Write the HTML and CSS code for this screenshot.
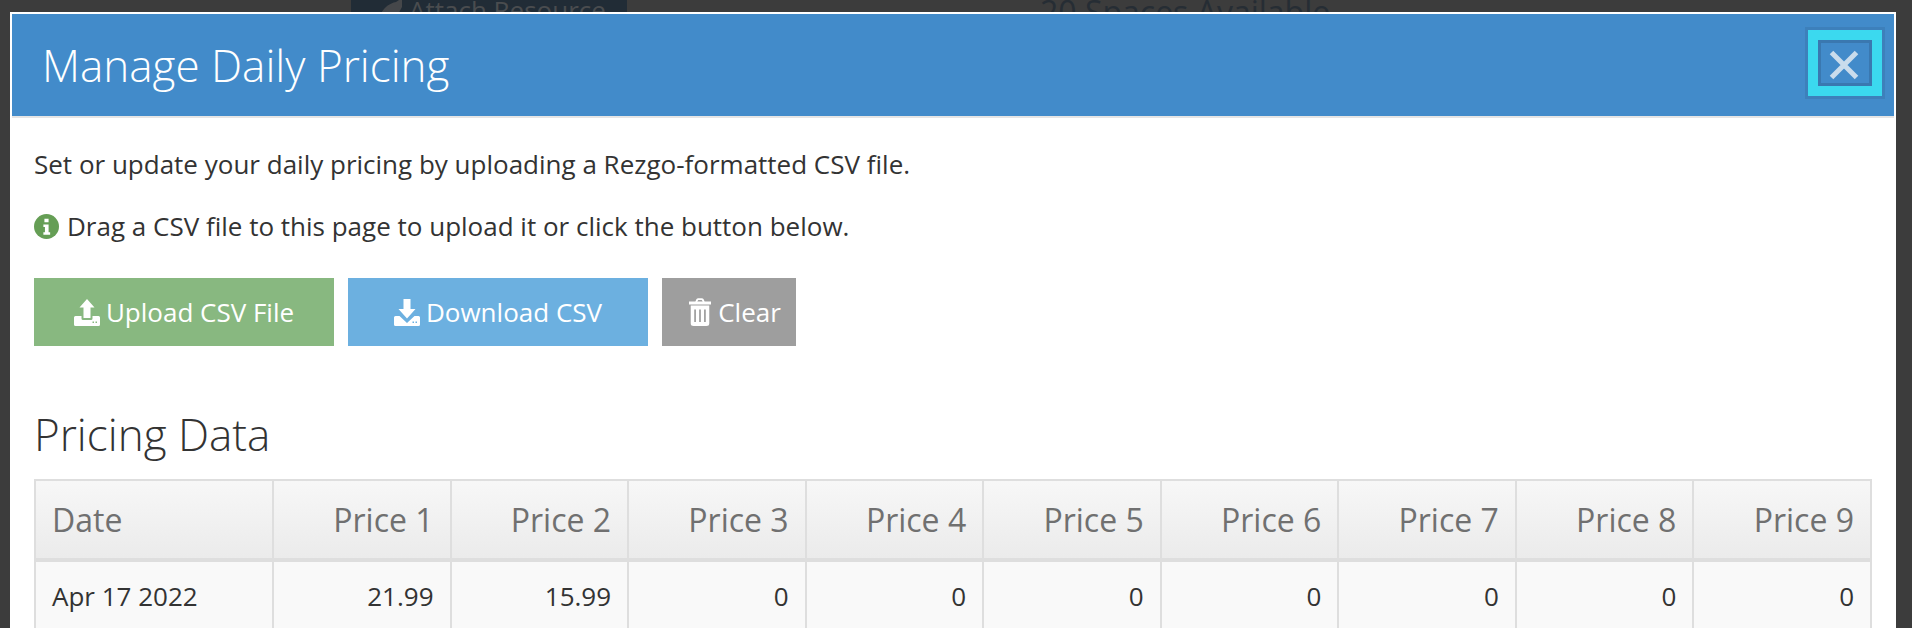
FILE: index.html
```html
<!DOCTYPE html>
<html lang="en">
<head>
<meta charset="utf-8">
<title>Manage Daily Pricing</title>
<link rel="stylesheet" href="styles.css">
</head>
<body>
<div class="backdrop-bar">
  <div class="attach">
    <svg viewBox="0 0 24 24" width="24" height="24"><path d="M24 0v9L16 24H0C2 14 8 6 18 4z"/></svg>
    Attach Resource
  </div>
  <div class="spaces">20 Spaces Available</div>
</div>
<div class="modal">
  <header class="modal-head">
    <h1>Manage Daily Pricing</h1>
    <button class="close" aria-label="Close">
      <svg viewBox="0 0 30 30" width="30" height="30"><path d="M2.500 2.500L27.500 27.500M27.500 2.500L2.500 27.500"/></svg>
    </button>
  </header>
  <div class="modal-body">
    <p class="lead">Set or update your daily pricing by uploading a Rezgo-formatted CSV file.</p>
    <p class="hint">
      <svg class="info" viewBox="0 0 24 24" width="25" height="25"><circle cx="12" cy="12" r="12"/><path class="glyph" d="M10 4.500h4v3.500h-4zM9 10h5v7.500h1.500V20h-6.500v-2.500H10.500v-5H9z"/></svg>
      Drag a CSV file to this page to upload it or click the button below.
    </p>
    <div class="actions">
      <button class="btn green">
        <svg viewBox="0 0 26 27" width="26" height="27" fill-rule="evenodd"><path d="M13 0L20.500 8.500H16.500V19H9.500V8.500H5.500ZM1.500 17H7.500V19.500Q7.500 21 9 21H17Q18.500 21 18.500 19.500V17H24.500Q26 17 26 18.500V25.500Q26 27 24.500 27H1.500Q0 27 0 25.500V18.500Q0 17 1.500 17ZM18.500 22.500V24H20V22.500ZM21.500 22.500V24H23V22.500Z"/></svg>
        Upload CSV File
      </button>
      <button class="btn blue">
        <svg viewBox="0 0 26 27" width="26" height="27" fill-rule="evenodd"><path d="M9.500 0H16.500V10H21.500L13 19.500L4.500 10H9.500ZM1.500 17H5.500L13 24L20.500 17H24.500Q26 17 26 18.500V25.500Q26 27 24.500 27H1.500Q0 27 0 25.500V18.500Q0 17 1.500 17ZM18.500 22.500V24H20V22.500ZM21.500 22.500V24H23V22.500Z"/></svg>
        Download CSV
      </button>
      <button class="btn grey">
        <svg viewBox="0 0 19 28" width="22" height="28" preserveAspectRatio="none" fill-rule="evenodd"><path d="M5.500 3.500L6.500 1Q7 .3 8 .3H11Q12 .3 12.500 1L13.500 3.500H19V6.500H0V3.500ZM7.200 3.500H11.800L11 2H8ZM1.500 7.500H17.500V25.500A2.500 2.500 0 0 1 15 28H4A2.500 2.500 0 0 1 1.500 25.500ZM4.500 11.500V24H6V11.500ZM8.750 11.500V24H10.250V11.500ZM13 11.500V24H14.500V11.500Z"/></svg>
        Clear
      </button>
    </div>
    <h2>Pricing Data</h2>
    <table>
      <thead>
        <tr><th class="date">Date</th><th>Price 1</th><th>Price 2</th><th>Price 3</th><th>Price 4</th><th>Price 5</th><th>Price 6</th><th>Price 7</th><th>Price 8</th><th>Price 9</th></tr>
      </thead>
      <tbody>
        <tr><td class="date">Apr 17 2022</td><td>21.99</td><td>15.99</td><td>0</td><td>0</td><td>0</td><td>0</td><td>0</td><td>0</td><td>0</td></tr>
      </tbody>
    </table>
  </div>
</div>
</body>
</html>
```

FILE: styles.css
```css
* { box-sizing: border-box; }
html, body { margin: 0; height: 628px; overflow: hidden; }
body { background: #3c3c3c; font-family: "Open Sans", sans-serif; color: #333; }
.backdrop-bar { height: 12px; overflow: hidden; display: flex; }
.attach { margin-left: 351px; width: 276px; height: 50px; background: #212c36; color: #4a4c4f; font-size: 26px; line-height: 20px; padding: 0 0 0 27px; display: flex; gap: 7px; white-space: nowrap; }
.attach svg { fill: #45474a; flex: none; margin-top: -2px; }
.spaces { margin-left: 413px; color: #262d34; font-size: 32px; line-height: 23px; white-space: nowrap; }
.modal { margin: 0 16px 0 10px; background: #fff; border: 2px solid #fff; height: 640px; }
.modal-head { height: 104px; background: #428bca; border-bottom: 2px solid #e5e5e5; display: flex; align-items: center; justify-content: space-between; padding: 0 12px 0 30px; }
h1 { margin: 0; font-size: 44px; font-weight: 300; color: #fff; line-height: 1; }
.close { width: 74px; height: 66px; margin-bottom: 4px; background: #428bca; border: 0; outline: 10px solid #3bd9ef; outline-offset: -10px; box-shadow: inset 0 0 0 13px #3a78b0, 0 0 0 3px #3d80bb; padding: 4px 2px 0 0; display: flex; align-items: center; justify-content: center; }
.close svg { stroke: #c9dcec; stroke-width: 5; fill: none; }
.modal-body { padding: 0 22px; }
p { margin: 0; font-size: 26px; line-height: 34px; }
.lead { margin-top: 29px; }
.hint { margin-top: 28px; display: flex; align-items: center; gap: 8px; }
.info { flex: none; }
.info circle { fill: #659e55; }
.info .glyph { fill: #fff; }
.actions { display: flex; gap: 14px; margin-top: 35px; }
.btn { height: 68px; border: 0; color: #fff; font: 26px "Open Sans", sans-serif; display: flex; align-items: center; justify-content: center; gap: 6px; padding: 0; }
.btn svg { fill: #fff; }
.green { width: 300px; background: #88b880; }
.blue { width: 300px; background: #6cb0e0; }
.grey { width: 134px; background: #9e9e9e; padding-left: 12px; gap: 7px; }
h2 { margin: 62px 0 19px; font-size: 44px; font-weight: 300; line-height: 52px; color: #333; }
table { border-collapse: collapse; width: 1838px; table-layout: fixed; }
th, td { border: 2px solid #dedede; text-align: right; padding: 0 16px 0 0; font-weight: 400; }
th { height: 80px; font-size: 32px; color: #707070; background: linear-gradient(#f7f7f7, #ebebeb); border-bottom-width: 4px; }
td { height: 70px; font-size: 26px; color: #333; background: #f9f9f9; }
.date { text-align: left; width: 238px; padding: 0 0 0 16px; }
```
